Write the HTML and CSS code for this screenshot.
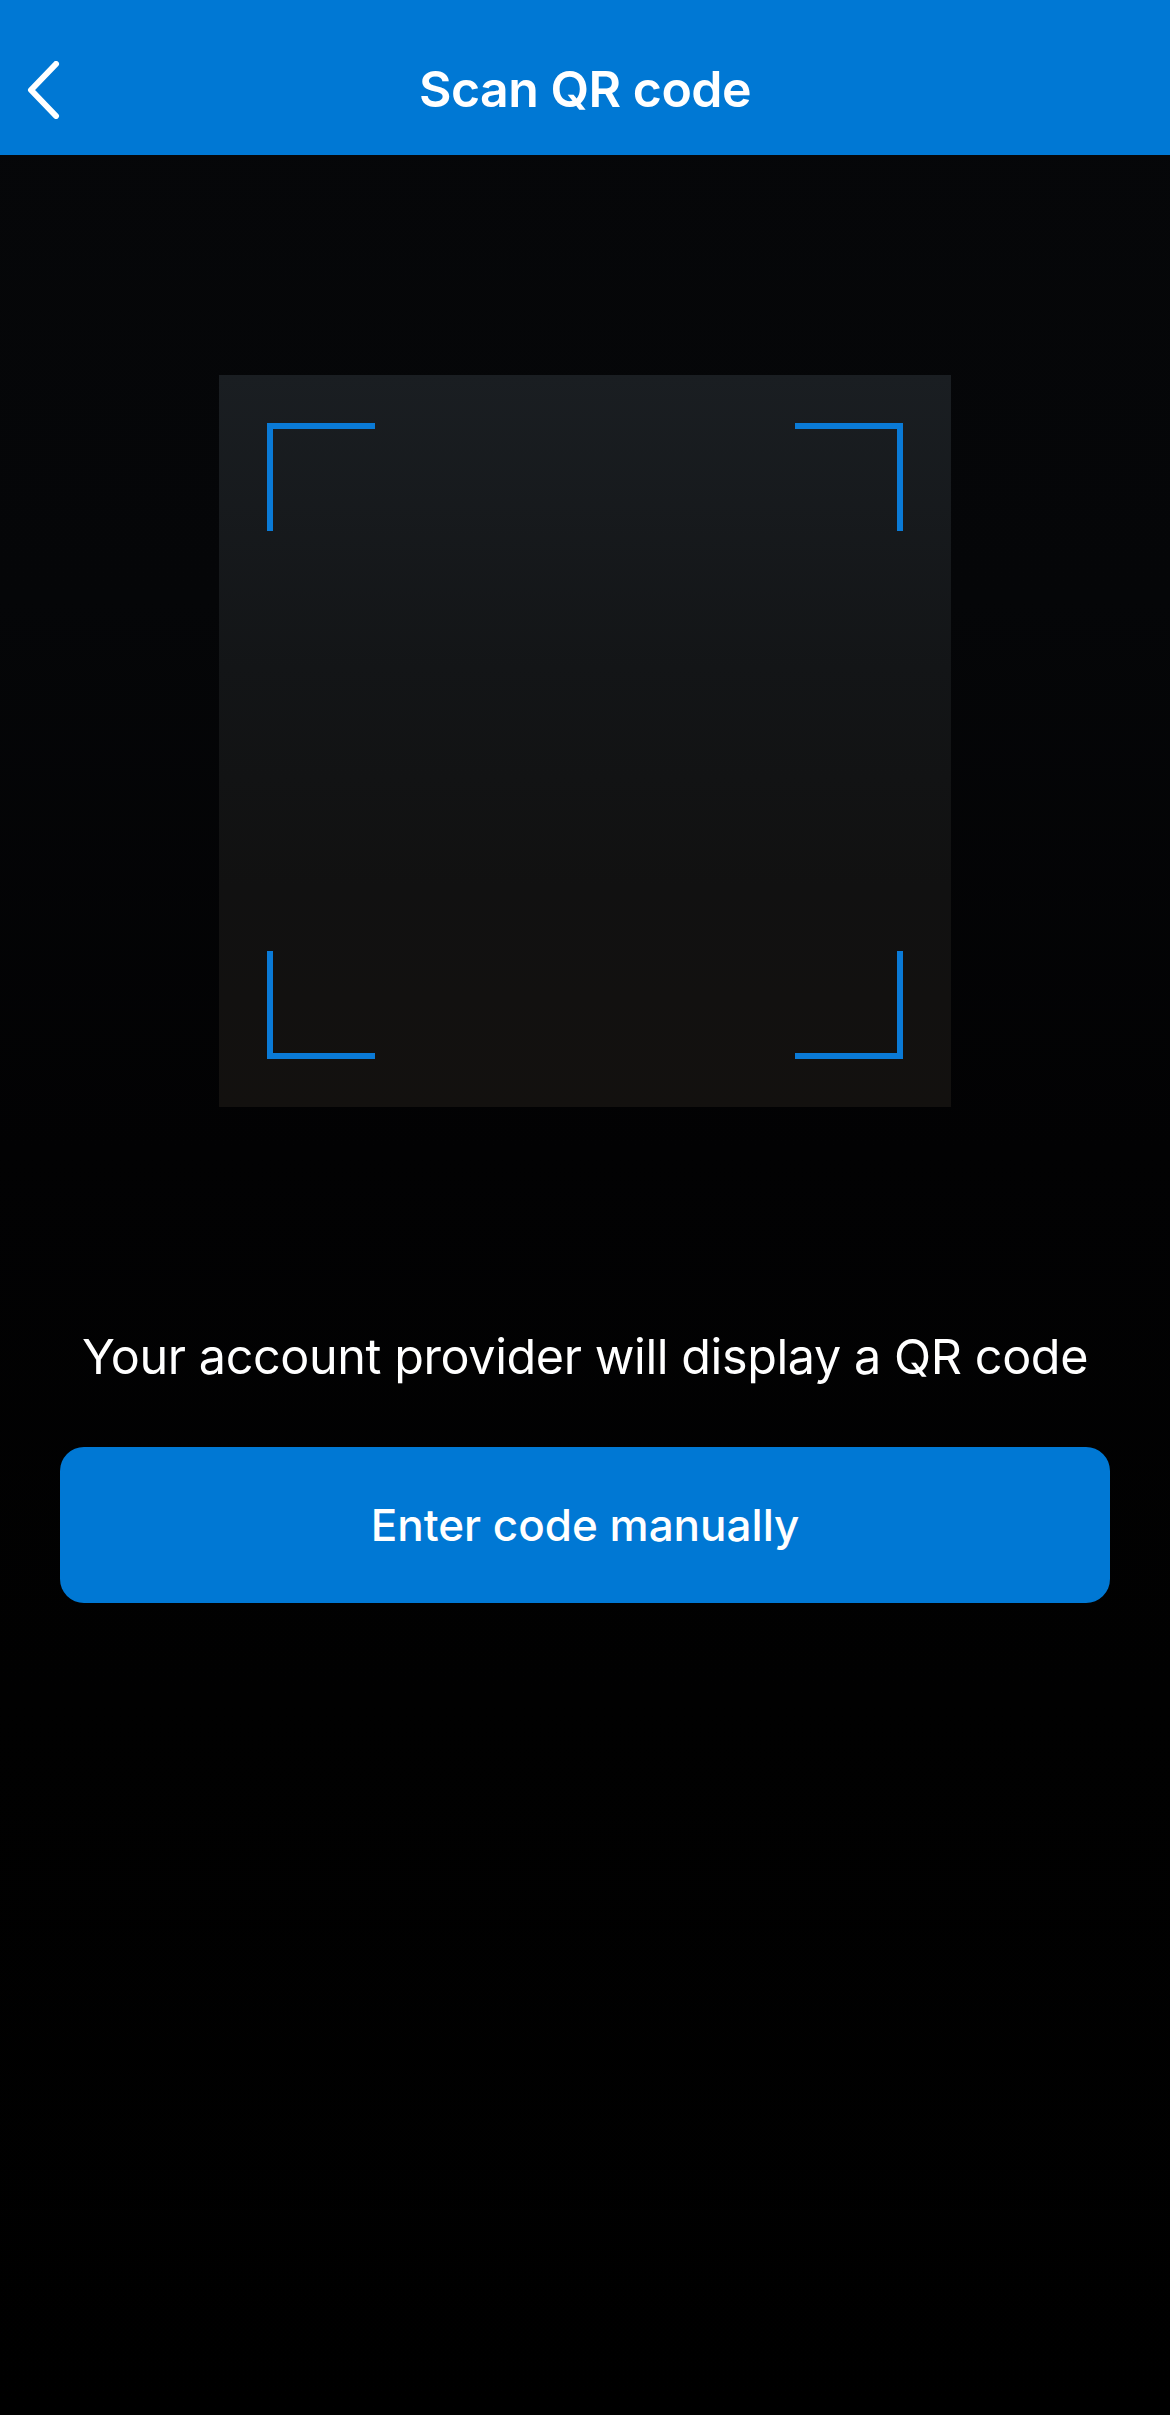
FILE: index.html
```html
<!DOCTYPE html>
<html lang="en">
<head>
  <meta charset="UTF-8" />
  <meta name="viewport" content="width=device-width, initial-scale=1.0" />
  <title>Scan QR code</title>
  <link rel="stylesheet" href="styles.css">
</head>
<body>
  <header class="topbar">
    <button class="back" aria-label="Back">
      <svg viewBox="0 0 34 58" aria-hidden="true">
        <path d="M30 3 L5 29 L30 55" />
      </svg>
    </button>
    <h1 class="title">Scan QR code</h1>
    <span></span>
  </header>

  <main class="scanner">
    <div class="viewfinder">
      <span class="corner tl"></span>
      <span class="corner tr"></span>
      <span class="corner bl"></span>
      <span class="corner br"></span>
    </div>
    <p class="hint">Your account provider will display a QR code</p>
    <button class="manual">Enter code manually</button>
  </main>
</body>
</html>
```

FILE: styles.css
```css
body {
  margin: 0;
  min-height: 2415px;
  font-family: "Inter", "Roboto", sans-serif;
  color: #ffffff;
  background: linear-gradient(#060709 0, #050608 600px, #020203 1150px, #010101 1700px, #000 2415px);
}
.topbar {
  height: 155px;
  background-color: #0078d4;
  display: grid;
  grid-template-columns: 1fr auto 1fr;
  align-items: center;
}
.back {
  justify-self: start;
  background: none;
  border: none;
  padding: 0 0 0 26px;
  margin-top: 24px;
  cursor: pointer;
}
.back svg {
  width: 34px;
  height: 58px;
  display: block;
  fill: none;
  stroke: #ffffff;
  stroke-width: 6;
  stroke-linecap: round;
  stroke-linejoin: round;
}
.title {
  margin: 22px 0 0;
  font-size: 50px;
  font-weight: 600;
  letter-spacing: -0.5px;
}
.scanner {
  display: flex;
  flex-direction: column;
  align-items: center;
  padding-top: 220px;
}
.viewfinder {
  position: relative;
  width: 732px;
  height: 732px;
  background: linear-gradient(#1a1e22, #131517 40%, #111111 70%, #13110f);
}
.corner {
  position: absolute;
  width: 102px;
  height: 102px;
  border: 0 solid #0a7ad6;
}
.corner.tl { top: 48px; left: 48px; border-top-width: 6px; border-left-width: 6px; }
.corner.tr { top: 48px; right: 48px; border-top-width: 6px; border-right-width: 6px; }
.corner.bl { bottom: 48px; left: 48px; border-bottom-width: 6px; border-left-width: 6px; }
.corner.br { bottom: 48px; right: 48px; border-bottom-width: 6px; border-right-width: 6px; }
.hint {
  margin: 220px 0 0;
  font-size: 48.5px;
  font-weight: 400;
  letter-spacing: -0.4px;
}
.manual {
  margin-top: 61px;
  width: 1050px;
  height: 156px;
  border: none;
  border-radius: 24px;
  background-color: #0078d4;
  color: #ffffff;
  font-family: "Inter", "Roboto", sans-serif;
  font-size: 44px;
  font-weight: 500;
  cursor: pointer;
}
```
